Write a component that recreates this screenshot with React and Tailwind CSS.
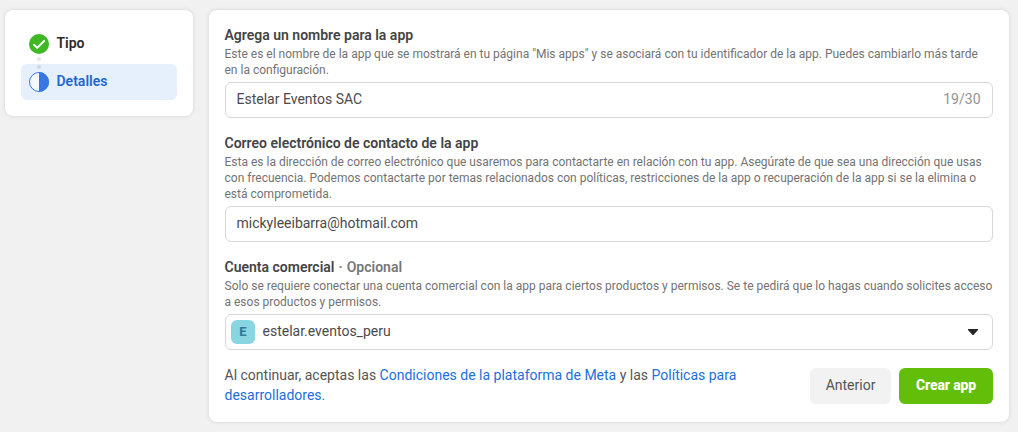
export default function App() {
  const label = "-ml-[0.5px] pb-[2px] text-[14px] leading-[18px] font-semibold text-[#444444]";
  const help = "-ml-[0.5px] text-[12px] leading-4 text-[#737373] whitespace-nowrap";
  const input = "mt-1 flex h-9 items-center rounded-md border border-[#d8d8d8] bg-white pr-[11px] pb-[2px] text-[14px] text-[#4b4b4b]";
  return (
    <div className="flex h-[432px] w-[1018px] items-start overflow-hidden bg-[#f1f1f1] pl-[5px] pt-[10px] font-['Roboto',sans-serif]">
      <nav className="h-[106px] w-[188px] shrink-0 rounded-lg bg-white px-4 pt-4 shadow-[0_0_4px_rgba(0,0,0,0.12)]">
        <div className="flex h-9 items-center gap-[7.5px] pl-2 text-[14px] font-semibold text-[#2b2b2b]">
          <svg width="20" height="20" viewBox="0 0 20 20"><circle cx="10" cy="10" r="10" fill="#3fb824" /><path d="M5 10.7l3.2 3.2 7-7" fill="none" stroke="#fff" strokeWidth="2" strokeLinecap="round" strokeLinejoin="round" /></svg>
          <span className="pb-[2px] leading-[18px]">Tipo</span>
        </div>
        <div className="relative mt-[2px] flex h-9 items-center gap-[7.5px] rounded-md bg-[#e6f0fd] pl-2 text-[14px] font-semibold text-[#1f66d0]">
          <span className="absolute -top-[7px] left-4 h-1 w-1 rounded-full bg-[#e4e4e4]" />
          <span className="absolute top-[1px] left-4 h-1 w-1 rounded-full bg-[#cfd9e5]" />
          <svg width="20" height="20" viewBox="0 0 20 20"><circle cx="10" cy="10" r="9.5" fill="#f5f9ff" stroke="#3578e5" /><path d="M10 0a10 10 0 0 1 0 20z" fill="#3578e5" /></svg>
          <span className="pb-[2px] leading-[18px]">Detalles</span>
        </div>
      </nav>
      <main className="ml-4 h-[412px] w-[800px] shrink-0 rounded-lg bg-white px-4 pt-4 shadow-[0_0_4px_rgba(0,0,0,0.12)]">
        <div className={label}>Agrega un nombre para la app</div>
        <p className={help}>Este es el nombre de la app que se mostrará en tu página "Mis apps" y se asociará con tu identificador de la app. Puedes cambiarlo más tarde<br />en la configuración.</p>
        <div className={input + " justify-between pl-[10.5px]"}><span>Estelar Eventos SAC</span><span className="mr-[0.5px] text-[#929292]">19/30</span></div>
        <div className={label + " mt-4"}>Correo electrónico de contacto de la app</div>
        <p className={help}>Esta es la dirección de correo electrónico que usaremos para contactarte en relación con tu app. Asegúrate de que sea una dirección que usas<br />con frecuencia. Podemos contactarte por temas relacionados con políticas, restricciones de la app o recuperación de la app si se la elimina o<br />está comprometida.</p>
        <div className={input + " pl-[10.5px]"}>mickyleeibarra@hotmail.com</div>
        <div className={label + " mt-4"}>Cuenta comercial <span className="ml-[0.5px] text-[#777777]">· <span className="ml-[0.7px]">Opcional</span></span></div>
        <p className={help}>Solo se requiere conectar una cuenta comercial con la app para ciertos productos y permisos. Se te pedirá que lo hagas cuando solicites acceso<br />a esos productos y permisos.</p>
        <div className={input + " pl-[5px]"}>
          <span className="mt-[2px] mr-[7.5px] flex h-6 w-6 items-center justify-center rounded-md bg-[#87d6e2] text-[13px] font-extrabold text-[#2e7b93]">E</span>
          estelar.eventos_peru
          <svg className="mt-[2px] mr-[3px] ml-auto" width="10" height="6" viewBox="0 0 10 6"><path d="M0 0h10v1L5.5 6h-1L0 1z" fill="#262626" /></svg>
        </div>
        <div className="mt-[15px] -ml-[0.5px] flex items-start">
          <p className="w-[585.5px] text-[14px] leading-5 text-[#555555]">Al continuar, aceptas las <span className="text-[#216fdb]">Condiciones de la plataforma de Meta</span> y las <span className="text-[#216fdb]">Políticas para<br />desarrolladores.</span></p>
          <div className="mt-[3px] flex h-9 w-[81px] items-center justify-center rounded-md bg-[#f2f2f2] pb-[2px] text-[14px] text-[#555555]">Anterior</div>
          <div className="mt-[3px] ml-2 flex h-9 w-[94px] items-center justify-center rounded-md bg-[#63be09] pb-[2px] text-[14px] font-extrabold tracking-[-0.15px] text-white">Crear app</div>
        </div>
      </main>
    </div>
  );
}
